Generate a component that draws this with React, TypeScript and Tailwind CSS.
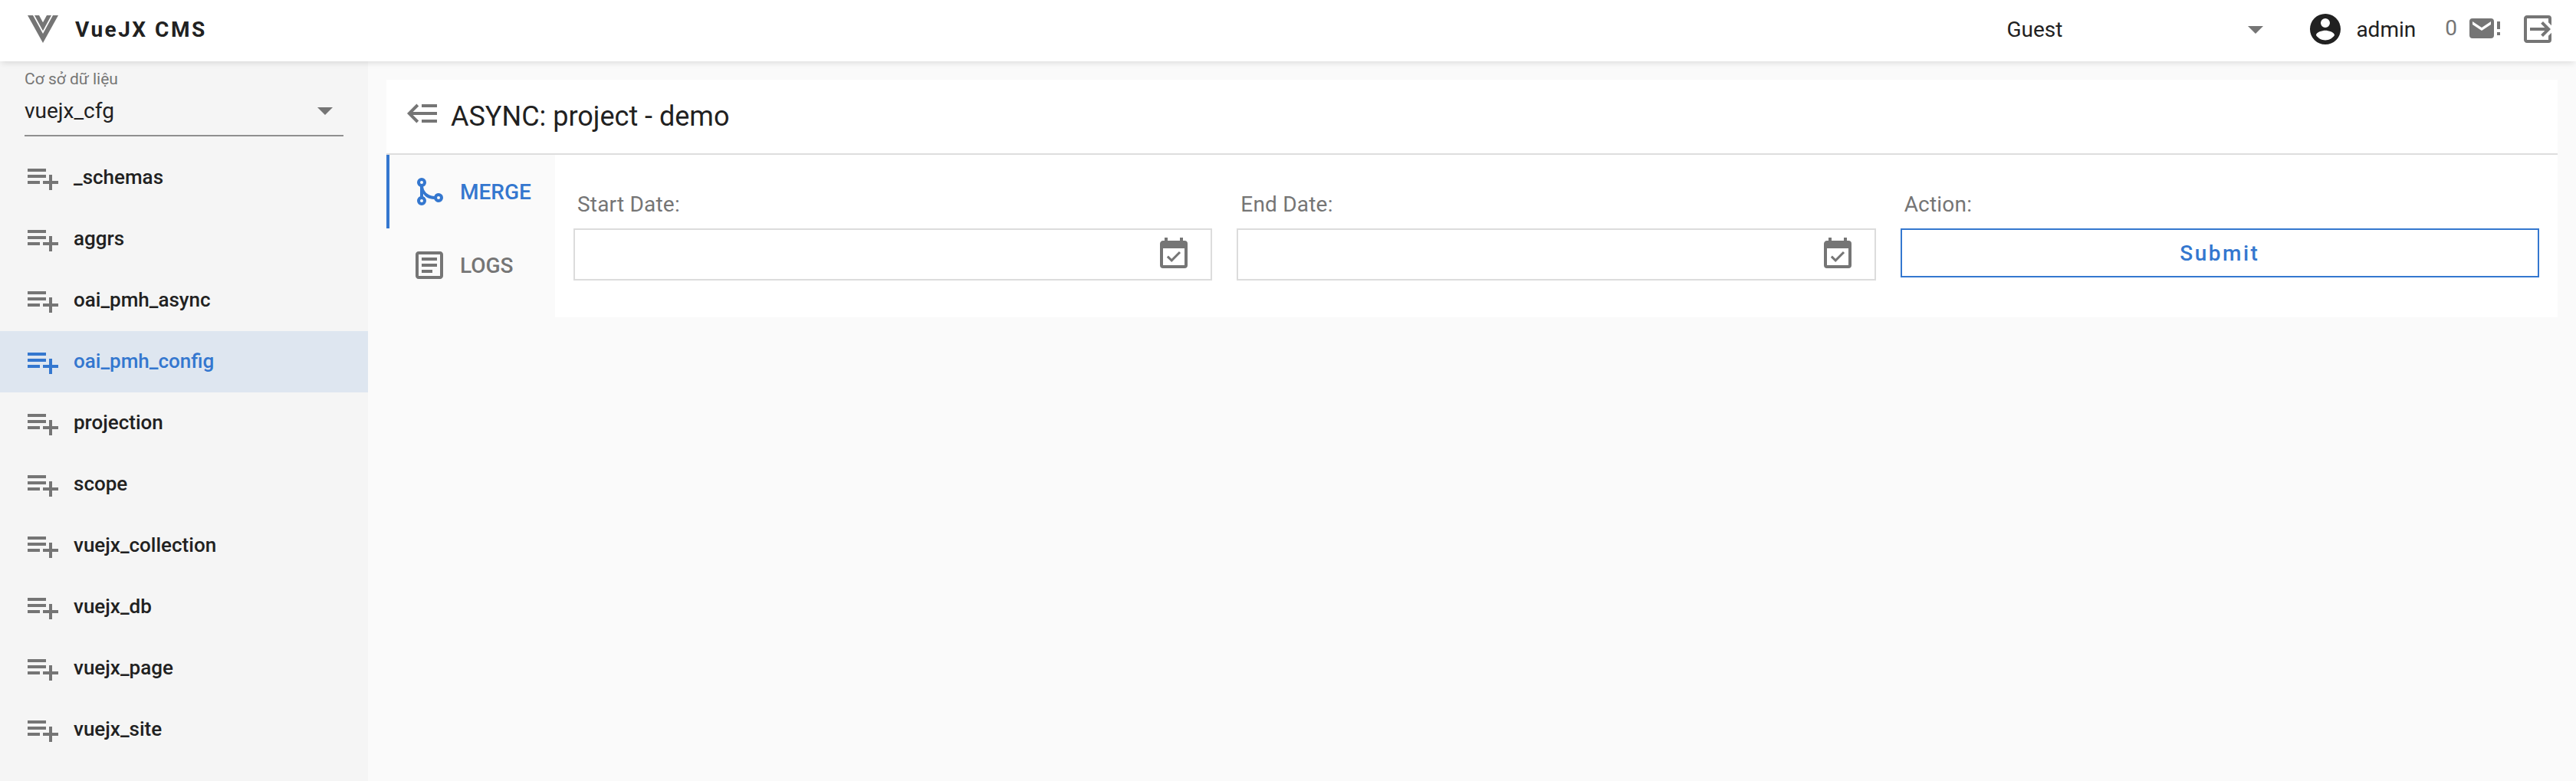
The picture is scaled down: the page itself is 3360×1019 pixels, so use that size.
import React from "react";

const icons = {
  playlist: "M2,16H10V14H2M18,14V10H16V14H12V16H16V20H18V16H22V14M14,6H2V8H14M14,10H2V12H14V10Z",
  vuejs: "M2,3H5.5L12,15L18.5,3H22L12,21L2,3M6.5,3H9.5L12,7.58L14.5,3H17.5L12,13.08L6.5,3Z",
  caret: "M7,10L12,15L17,10H7Z",
  account:
    "M12,19.2C9.5,19.2 7.29,17.92 6,16C6.03,14 10,12.9 12,12.9C14,12.9 17.97,14 18,16C16.71,17.92 14.5,19.2 12,19.2M12,5A3,3 0 0,1 15,8A3,3 0 0,1 12,11A3,3 0 0,1 9,8A3,3 0 0,1 12,5M12,2A10,10 0 0,0 2,12A10,10 0 0,0 12,22A10,10 0 0,0 22,12C22,6.47 17.5,2 12,2Z",
  mail: "M20,7V12H22V7H20M20,16H22V14H20V16M16,5H4A2,2 0 0,0 2,7V16A2,2 0 0,0 4,18H16A2,2 0 0,0 18,16V7A2,2 0 0,0 16,5M16,9L10,13L4,9V7L10,11L16,7V9Z",
  exit: "M14.08,15.59L16.67,13H7V11H16.67L14.08,8.41L15.5,7L20.5,12L15.5,17L14.08,15.59M19,3A2,2 0 0,1 21,5V9.67L19,7.67V5H5V19H19V16.33L21,14.33V19A2,2 0 0,1 19,21H5C3.89,21 3,20.1 3,19V5C3,3.89 3.89,3 5,3H19Z",
  back: "M1.5,12L7.7,5.8L9.1,7.2L5.3,11H21V13H5.3L9.1,16.8L7.7,18.2ZM11,6H21V8H11ZM11,16H21V18H11Z",
  merge:
    "M7,3A3,3 0 0,1 10,6C10,7.29 9.19,8.39 8.04,8.81C8.58,13.81 13.08,14.77 15.19,14.96C15.61,13.81 16.71,13 18,13A3,3 0 0,1 21,16A3,3 0 0,1 18,19C16.69,19 15.57,18.16 15.16,17C10.91,16.8 9.44,15.19 8,13.39V15.17C9.17,15.58 10,16.69 10,18A3,3 0 0,1 7,21A3,3 0 0,1 4,18C4,16.69 4.83,15.58 6,15.17V8.83C4.83,8.42 4,7.31 4,6A3,3 0 0,1 7,3M7,5A1,1 0 0,0 6,6A1,1 0 0,0 7,7A1,1 0 0,0 8,6A1,1 0 0,0 7,5M7,17A1,1 0 0,0 6,18A1,1 0 0,0 7,19A1,1 0 0,0 8,18A1,1 0 0,0 7,17M18,15A1,1 0 0,0 17,16A1,1 0 0,0 18,17A1,1 0 0,0 19,16A1,1 0 0,0 18,15Z",
  logs: "M5,3C3.89,3 3,3.89 3,5V19C3,20.11 3.89,21 5,21H19C20.11,21 21,20.11 21,19V5C21,3.89 20.11,3 19,3H5M5,5H19V19H5V5M7,7V9H17V7H7M7,11V13H17V11H7M7,15V17H14V15H7Z",
  calendar:
    "M19,19H5V8H19M19,3H18V1H16V3H8V1H6V3H5C3.89,3 3,3.9 3,5V19A2,2 0 0,0 5,21H19A2,2 0 0,0 21,19V5A2,2 0 0,0 19,3M16.53,11.06L15.47,10L10.59,14.88L8.47,12.76L7.41,13.82L10.59,17L16.53,11.06Z",
};

function Icon({ name, className = "" }: { name: keyof typeof icons; className?: string }) {
  return (
    <svg viewBox="0 0 24 24" fill="currentColor" aria-hidden="true" className={"size-12 shrink-0 " + className}>
      <path d={icons[name]} />
    </svg>
  );
}

const collections = [
  "_schemas",
  "aggrs",
  "oai_pmh_async",
  "oai_pmh_config",
  "projection",
  "scope",
  "vuejx_collection",
  "vuejx_db",
  "vuejx_page",
  "vuejx_site",
];
const activeCollection = "oai_pmh_config";

function Header() {
  return (
    <header className="relative z-10 flex h-20 shrink-0 items-center bg-white text-[28px] leading-[33px] shadow-[0_4px_8px_-2px_rgba(0,0,0,0.12)]">
      <Icon name="vuejs" className="ml-8 -mt-1 text-[#757575]" />
      <h1 className="ml-[18px] -mt-[3px] font-bold tracking-[2.5px]">VueJX CMS</h1>
      <div className="ml-auto flex w-[349px] items-center justify-between">
        <span className="-mt-[3px]">Guest</span>
        <Icon name="caret" className="-mt-1 text-[#757575]" />
      </div>
      <Icon name="account" className="ml-[43px] -mt-1" />
      <span className="-mt-[3px] ml-4">admin</span>
      <span className="-mt-[7px] ml-[38px] text-[#757575]">0</span>
      <Icon name="mail" className="-mt-1 ml-3 text-[#757575]" />
      <Icon name="exit" className="-mt-1 mr-[26px] ml-[21px] text-[#757575]" />
    </header>
  );
}

function Sidebar() {
  return (
    <aside className="w-[480px] shrink-0 bg-[#f5f5f5]">
      <div className="mx-8 mb-[14px] h-[98px] border-b-2 border-[#8f8f8f] pt-2.5">
        <div className="h-[30px] text-[21px] leading-[27px] text-[#757575]">Cơ sở dữ liệu</div>
        <div className="flex h-12 items-center justify-between">
          <span className="mt-px text-[28px] leading-[33px]">vuejx_cfg</span>
          <Icon name="caret" className="text-[#757575]" />
        </div>
      </div>
      <nav>
        {collections.map((name) => (
          <a
            key={name}
            className={
              name === activeCollection
                ? "flex h-20 items-center gap-4 bg-[#dee6f0] pl-8 text-[#3477cf]"
                : "flex h-20 items-center gap-4 pl-8"
            }
          >
            <Icon name="playlist" className={name === activeCollection ? "" : "text-[#757575]"} />
            <span className="-mt-0.5 text-[26px] leading-[30px] font-medium">{name}</span>
          </a>
        ))}
      </nav>
    </aside>
  );
}

function FieldLabel({ children }: { children: React.ReactNode }) {
  return (
    <span className="h-[58px] pt-[10px] pl-[5px] text-[28px] leading-[33px] tracking-[0.2px] text-[#757575]">
      {children}
    </span>
  );
}

function DateField({ label }: { label: string }) {
  return (
    <label className="flex flex-1 flex-col">
      <FieldLabel>{label}</FieldLabel>
      <span className="flex h-[68px] items-center justify-end border-2 border-[#dcdcdc] pr-6">
        <Icon name="calendar" className="text-[#757575]" />
      </span>
    </label>
  );
}

export default function App() {
  return (
    <div className="flex h-[1019px] flex-col overflow-hidden bg-[#fafafa] font-[Roboto,sans-serif] text-[#212121]">
      <Header />
      <div className="flex min-h-0 flex-1">
        <Sidebar />
        <main className="flex-1 px-6 pt-6">
          <div className="flex h-[98px] items-center border-b-2 border-[#dedede] bg-white pl-6">
            <Icon name="back" className="-mt-2 text-[#757575]" />
            <h2 className="ml-3 text-[36px] leading-[42px]">ASYNC: project - demo</h2>
          </div>
          <div className="flex">
            <div className="w-[220px] text-[28px] leading-[33px] font-medium">
              <div className="flex h-24 items-center gap-4 border-l-4 border-[#3477cf] pl-7 text-[#3477cf]">
                <Icon name="merge" />
                <span className="mt-px">MERGE</span>
              </div>
              <div className="flex h-24 items-center gap-4 pl-8 text-[#757575]">
                <Icon name="logs" />
                <span className="mt-px">LOGS</span>
              </div>
            </div>
            <section className="flex h-[212px] flex-1 gap-8 bg-white px-6 pt-[38px]">
              <DateField label="Start Date:" />
              <DateField label="End Date:" />
              <div className="flex flex-1 flex-col">
                <FieldLabel>Action:</FieldLabel>
                <button className="h-16 border-2 border-[#3477cf] pt-px text-[28px] leading-[33px] font-medium tracking-[2.5px] text-[#3477cf]">
                  Submit
                </button>
              </div>
            </section>
          </div>
        </main>
      </div>
    </div>
  );
}
